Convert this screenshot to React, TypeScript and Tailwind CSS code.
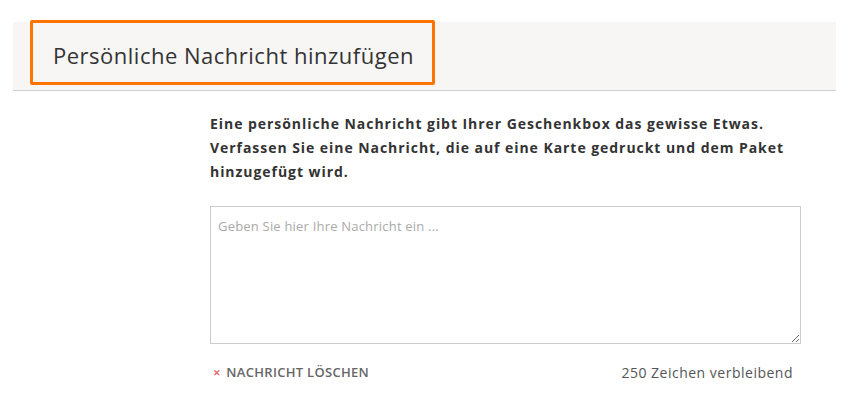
import { useState } from "react";

const MAX = 250;

export default function App() {
  const [msg, setMsg] = useState("");

  return (
    <div className="min-h-[405px] w-[849px] bg-white pt-[22px] font-['Open_Sans',sans-serif] text-[#333]">
      <div className="relative mx-[13px] h-[69px] border-b border-[#cfcfcf] bg-[#f7f6f4]">
        <h2 className="pl-[40px] pt-[19px] text-[22px] leading-[28px] font-normal tracking-[0.5px] text-[#333]">
          Persönliche Nachricht hinzufügen
        </h2>
        {/* highlight frame */}
        <div className="pointer-events-none absolute left-[17px] top-[-2px] h-[65px] w-[405px] rounded-[2px] border-[3px] border-[#ff7300]" />
      </div>

      <div className="ml-[210px] w-[591px] pt-[21px]">
        <p className="text-[14px] leading-[24px] font-bold tracking-[0.95px] text-[#333]">
          Eine persönliche Nachricht gibt Ihrer Geschenkbox das gewisse Etwas.
          <br />
          Verfassen Sie eine Nachricht, die auf eine Karte gedruckt und dem Paket hinzugefügt wird.
        </p>

        <textarea
          value={msg}
          maxLength={MAX}
          onChange={(e) => setMsg(e.target.value)}
          placeholder="Geben Sie hier Ihre Nachricht ein ..."
          className="mt-[22px] block h-[138px] w-full resize-y border border-[#cccccc] px-[7px] py-[10px] text-[13px] leading-[18px] tracking-[0.2px] text-[#333] outline-none placeholder:text-[#aaa]"
        />

        <div className="mt-[18px] flex items-center justify-between pr-[8px]">
          <button
            onClick={() => setMsg("")}
            className="flex items-center gap-[5px] pl-[3px] text-[13px] font-semibold uppercase tracking-[0.3px] text-[#666]"
          >
            <span className="text-[9px] text-[#e36a6a]">✕</span>
            Nachricht löschen
          </button>
          <span className="text-[14px] tracking-[0.5px] text-[#555]">
            {MAX - msg.length} Zeichen verbleibend
          </span>
        </div>
      </div>
    </div>
  );
}
